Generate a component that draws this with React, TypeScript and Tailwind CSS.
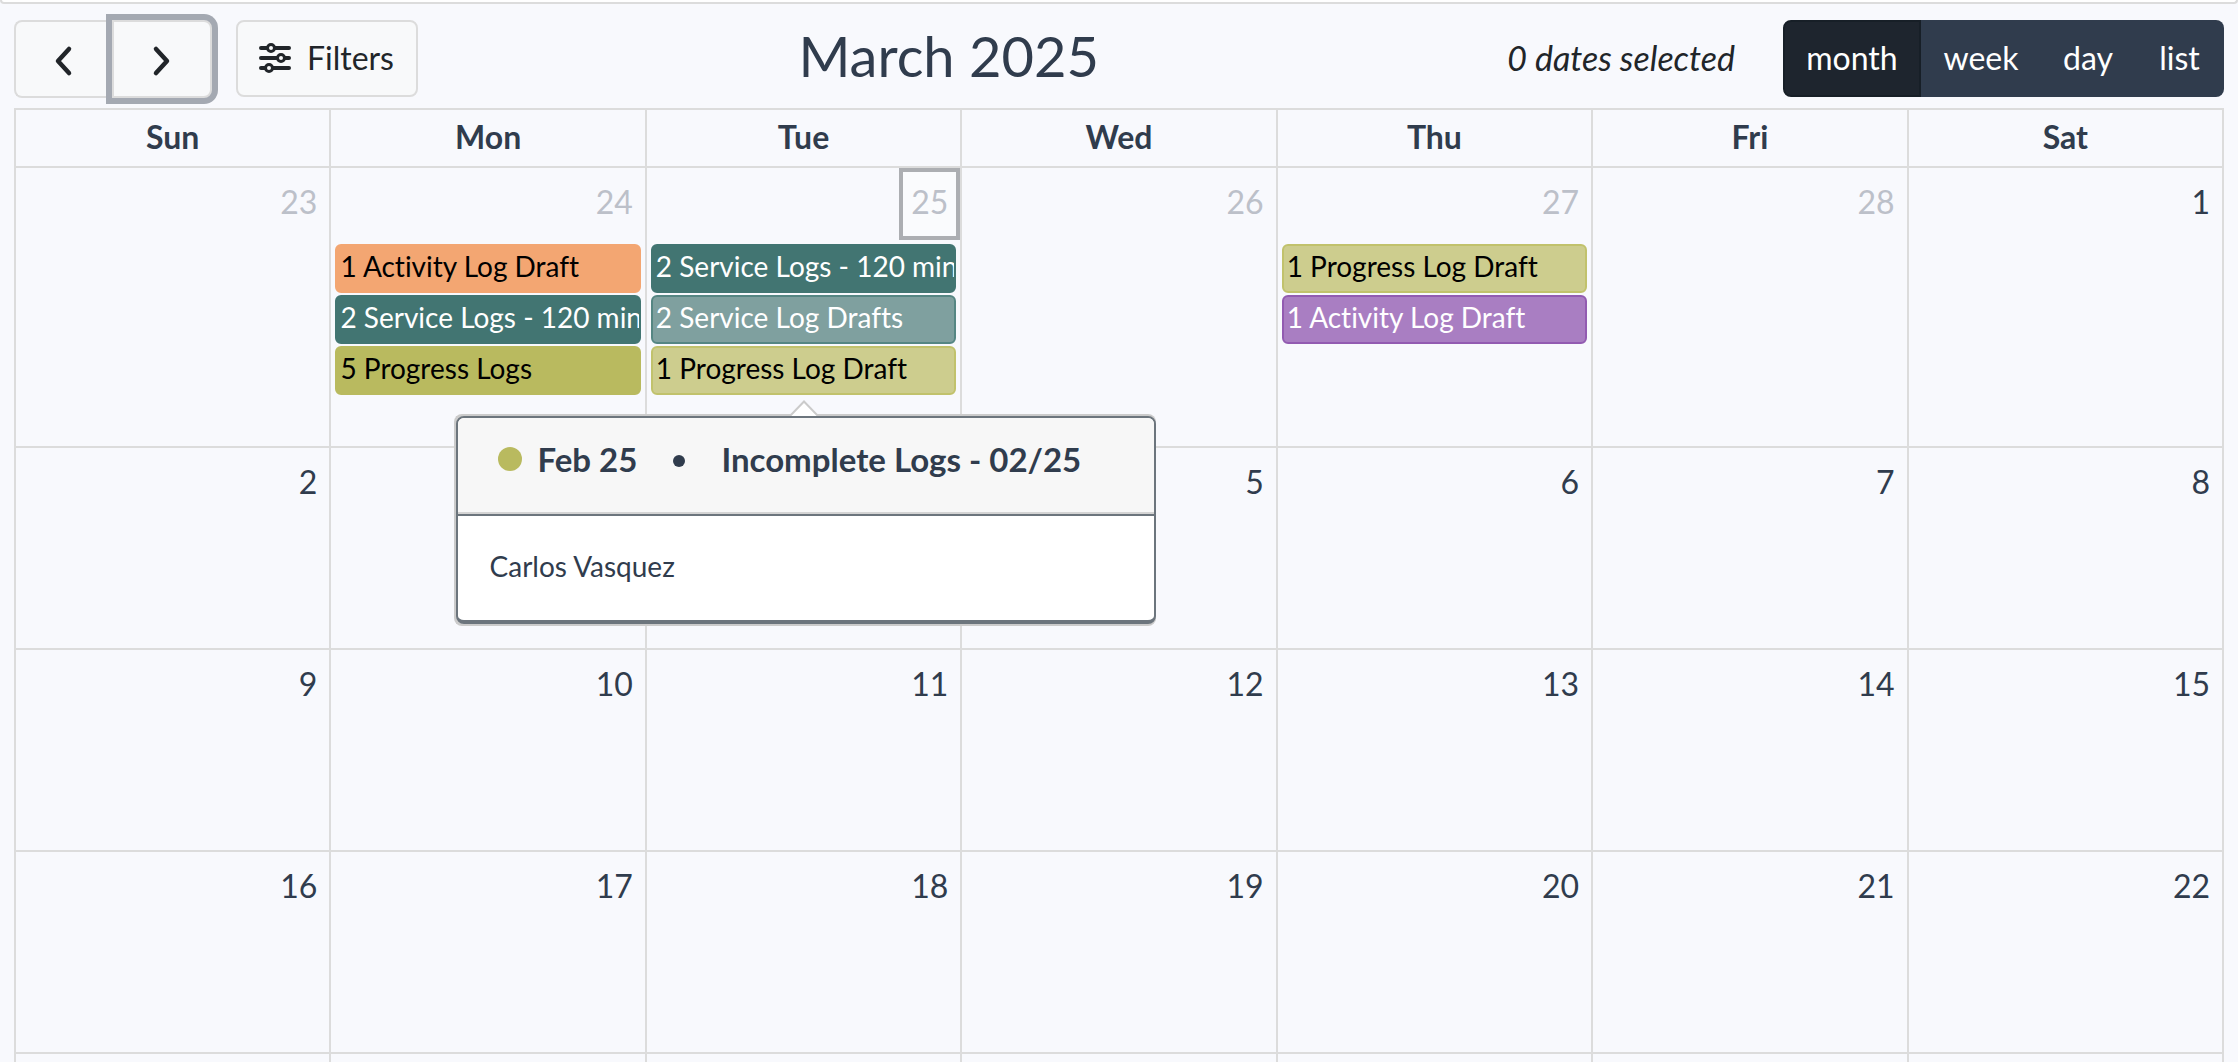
type LogEvent = { label: string; style: string };
type Day = { date: number; muted?: boolean; today?: boolean; events?: LogEvent[]; popover?: boolean };

const ORANGE = "bg-[#f3a672] border-[#f3a672] text-black";
const TEAL = "bg-[#427572] border-[#427572] text-white";
const TEAL_DRAFT = "bg-[#7fa09f] border-[#558683] text-white";
const OLIVE = "bg-[#b9ba5f] border-[#b9ba5f] text-black";
const OLIVE_DRAFT = "bg-[#cdcd8e] border-[#c1c26c] text-black";
const PURPLE_DRAFT = "bg-[#a97ec2] border-[#925bb1] text-white";

const weekdays = ["Sun", "Mon", "Tue", "Wed", "Thu", "Fri", "Sat"];

const firstWeek: Day[] = [
  { date: 23, muted: true },
  {
    date: 24,
    muted: true,
    events: [
      { label: "1 Activity Log Draft", style: ORANGE },
      { label: "2 Service Logs - 120 min", style: TEAL },
      { label: "5 Progress Logs", style: OLIVE },
    ],
  },
  {
    date: 25,
    muted: true,
    today: true,
    popover: true,
    events: [
      { label: "2 Service Logs - 120 min", style: TEAL },
      { label: "2 Service Log Drafts", style: TEAL_DRAFT },
      { label: "1 Progress Log Draft", style: OLIVE_DRAFT },
    ],
  },
  { date: 26, muted: true },
  {
    date: 27,
    muted: true,
    events: [
      { label: "1 Progress Log Draft", style: OLIVE_DRAFT },
      { label: "1 Activity Log Draft", style: PURPLE_DRAFT },
    ],
  },
  { date: 28, muted: true },
  { date: 1 },
];

const week = (start: number): Day[] => weekdays.map((_, i) => ({ date: start + i }));
const weeks: Day[][] = [firstWeek, week(2), week(9), week(16)];

function Chevron({ points }: { points: string }) {
  return (
    <svg width="20" height="32" viewBox="0 0 20 32" fill="none" stroke="#212529" strokeWidth="4.5" strokeLinecap="round" strokeLinejoin="round" aria-hidden="true">
      <polyline points={points} />
    </svg>
  );
}

function SlidersIcon() {
  return (
    <svg width="32" height="32" viewBox="0 0 32 32" stroke="#212529" aria-hidden="true">
      <g strokeWidth="4" strokeLinecap="round">
        <path d="M2 6H30M2 16H30M2 26H30" />
      </g>
      <g strokeWidth="3" fill="#f8f9fa">
        <circle cx="12" cy="6" r="3.5" />
        <circle cx="22" cy="16" r="3.5" />
        <circle cx="10" cy="26" r="3.5" />
      </g>
    </svg>
  );
}

function Toolbar() {
  const views = [
    { name: "month", style: "w-[138px] rounded-l-lg border-2 border-[#171f27] bg-[#1e252e] pb-0.5" },
    { name: "week", style: "w-[120px] bg-[#303c4d] pb-0.5" },
    { name: "day", style: "w-[94px] bg-[#303c4d] pb-0.5" },
    { name: "list", style: "w-[89px] rounded-r-lg bg-[#303c4d] pb-0.5" },
  ];
  return (
    <header className="flex items-start justify-between px-[14px] pt-4">
      <div className="flex gap-6">
        <div className="flex">
          <button aria-label="Previous month" className="flex h-[78px] w-[98px] items-center justify-center rounded-l-lg border-2 border-r-0 border-[#dcdcdc] bg-[#f8f9fa] pt-1">
            <Chevron points="15,4 4,16 15,28" />
          </button>
          <button aria-label="Next month" className="flex h-[78px] w-[100px] items-center justify-center rounded-r-lg border-2 border-[#dcdcdc] bg-[#f8f9fa] pt-1 ring-[6px] ring-[#a4a9b2]">
            <Chevron points="4,4 15,16 4,28" />
          </button>
        </div>
        <button className="flex h-[77px] items-center gap-4 rounded-lg border-2 border-[#dcdcdc] bg-[#f8f9fa] pb-0.5 pl-[21px] pr-[22px] text-[32px] leading-[48px] text-[#212529]">
          <SlidersIcon />
          Filters
        </button>
      </div>
      <h2 className="text-[56px] leading-[72px]">March 2025</h2>
      <div className="flex items-center justify-end gap-12">
        <span className="pb-0.5 pl-7 text-[34px] italic leading-[48px] text-[#212529]">0 dates selected</span>
        <div className="flex h-[77px] text-[32px] leading-[48px] text-white">
          {views.map((v) => (
            <button key={v.name} className={v.style}>
              {v.name}
            </button>
          ))}
        </div>
      </div>
    </header>
  );
}

function Popover() {
  return (
    <div role="dialog" aria-label="Incomplete Logs - 02/25" className="absolute left-1/2 top-[246px] z-10 -ml-[350px] w-[702px] rounded-lg border-y-2 border-l-2 border-[#cbcbcb] bg-[#cbcbcb] text-left">
      <svg className="absolute -top-4 left-[333px]" width="30" height="16" viewBox="0 0 30 16" aria-hidden="true">
        <path d="M1 16L15 1.500L29 16" fill="#fff" stroke="#cbcbcb" strokeWidth="2" />
      </svg>
      <div className="overflow-hidden rounded-lg border-2 border-b-4 border-[#6c757d] bg-white">
        <h3 className="flex h-24 items-center border-b-2 border-[#d4d4d4] bg-[#f7f7f7] pb-3 pl-10 text-[33px] font-bold leading-[48px]">
          <span className="mr-4 size-6 rounded-full bg-[#b9ba5f]" />
          Feb 25
          <span className="mx-9 mt-1 size-3 rounded-full bg-[#303c4d]" />
          Incomplete Logs - 02/25
        </h3>
        <div className="border-t-2 border-[#6c757d] px-8 pb-8 pt-7 text-[28px] leading-[44px]">Carlos Vasquez</div>
      </div>
    </div>
  );
}

function DayCell({ day }: { day: Day }) {
  const box = day.today ? "border-4 border-[#acaeb2] bg-[#fafbfd] px-2 pb-[10px] pt-1.5" : "px-3 pb-[14px] pt-[10px]";
  return (
    <td className="relative border-2 border-[#dcdcdc] p-0 align-top">
      <div className="flex justify-end">
        <a href={"#day-" + day.date} className={"text-[32px] leading-[48px] " + box + (day.muted ? " text-[#bcc0c9]" : "")}>
          {day.date}
        </a>
      </div>
      <div className="flex flex-col gap-0.5 px-1 pt-1">
        {day.events?.map((e) => (
          <a key={e.label} href="#logs" className={"h-[49px] overflow-hidden whitespace-nowrap rounded-md border-2 px-[3px] text-[28px] leading-10 " + e.style}>
            {e.label}
          </a>
        ))}
      </div>
      {day.popover && <Popover />}
    </td>
  );
}

export default function App() {
  return (
    <div className="h-screen overflow-hidden bg-[#f8f9fd] font-['Lato','Open_Sans',sans-serif] text-[#303c4d] [font-variant-ligatures:none]">
      <div className="h-1 rounded-b-lg border-x-2 border-b-2 border-[#dcdcdc] bg-white" />
      <Toolbar />
      <main className="px-[14px] pt-[10px]">
        <table className="w-full table-fixed border-collapse">
          <thead>
            <tr className="h-[58px]">
              {weekdays.map((d) => (
                <th key={d} scope="col" className="border-2 border-[#dcdcdc] p-0 pb-0.5 text-[32px] font-bold leading-[48px]">
                  {d}
                </th>
              ))}
            </tr>
          </thead>
          <tbody>
            {weeks.map((days, i) => (
              <tr key={i} className={i === 0 ? "h-[280px]" : "h-[202px]"}>
                {days.map((day) => (
                  <DayCell key={day.date} day={day} />
                ))}
              </tr>
            ))}
            <tr className="h-[202px]">
              {weekdays.map((d) => (
                <td key={d} className="border-2 border-[#dcdcdc]" />
              ))}
            </tr>
          </tbody>
        </table>
      </main>
    </div>
  );
}
